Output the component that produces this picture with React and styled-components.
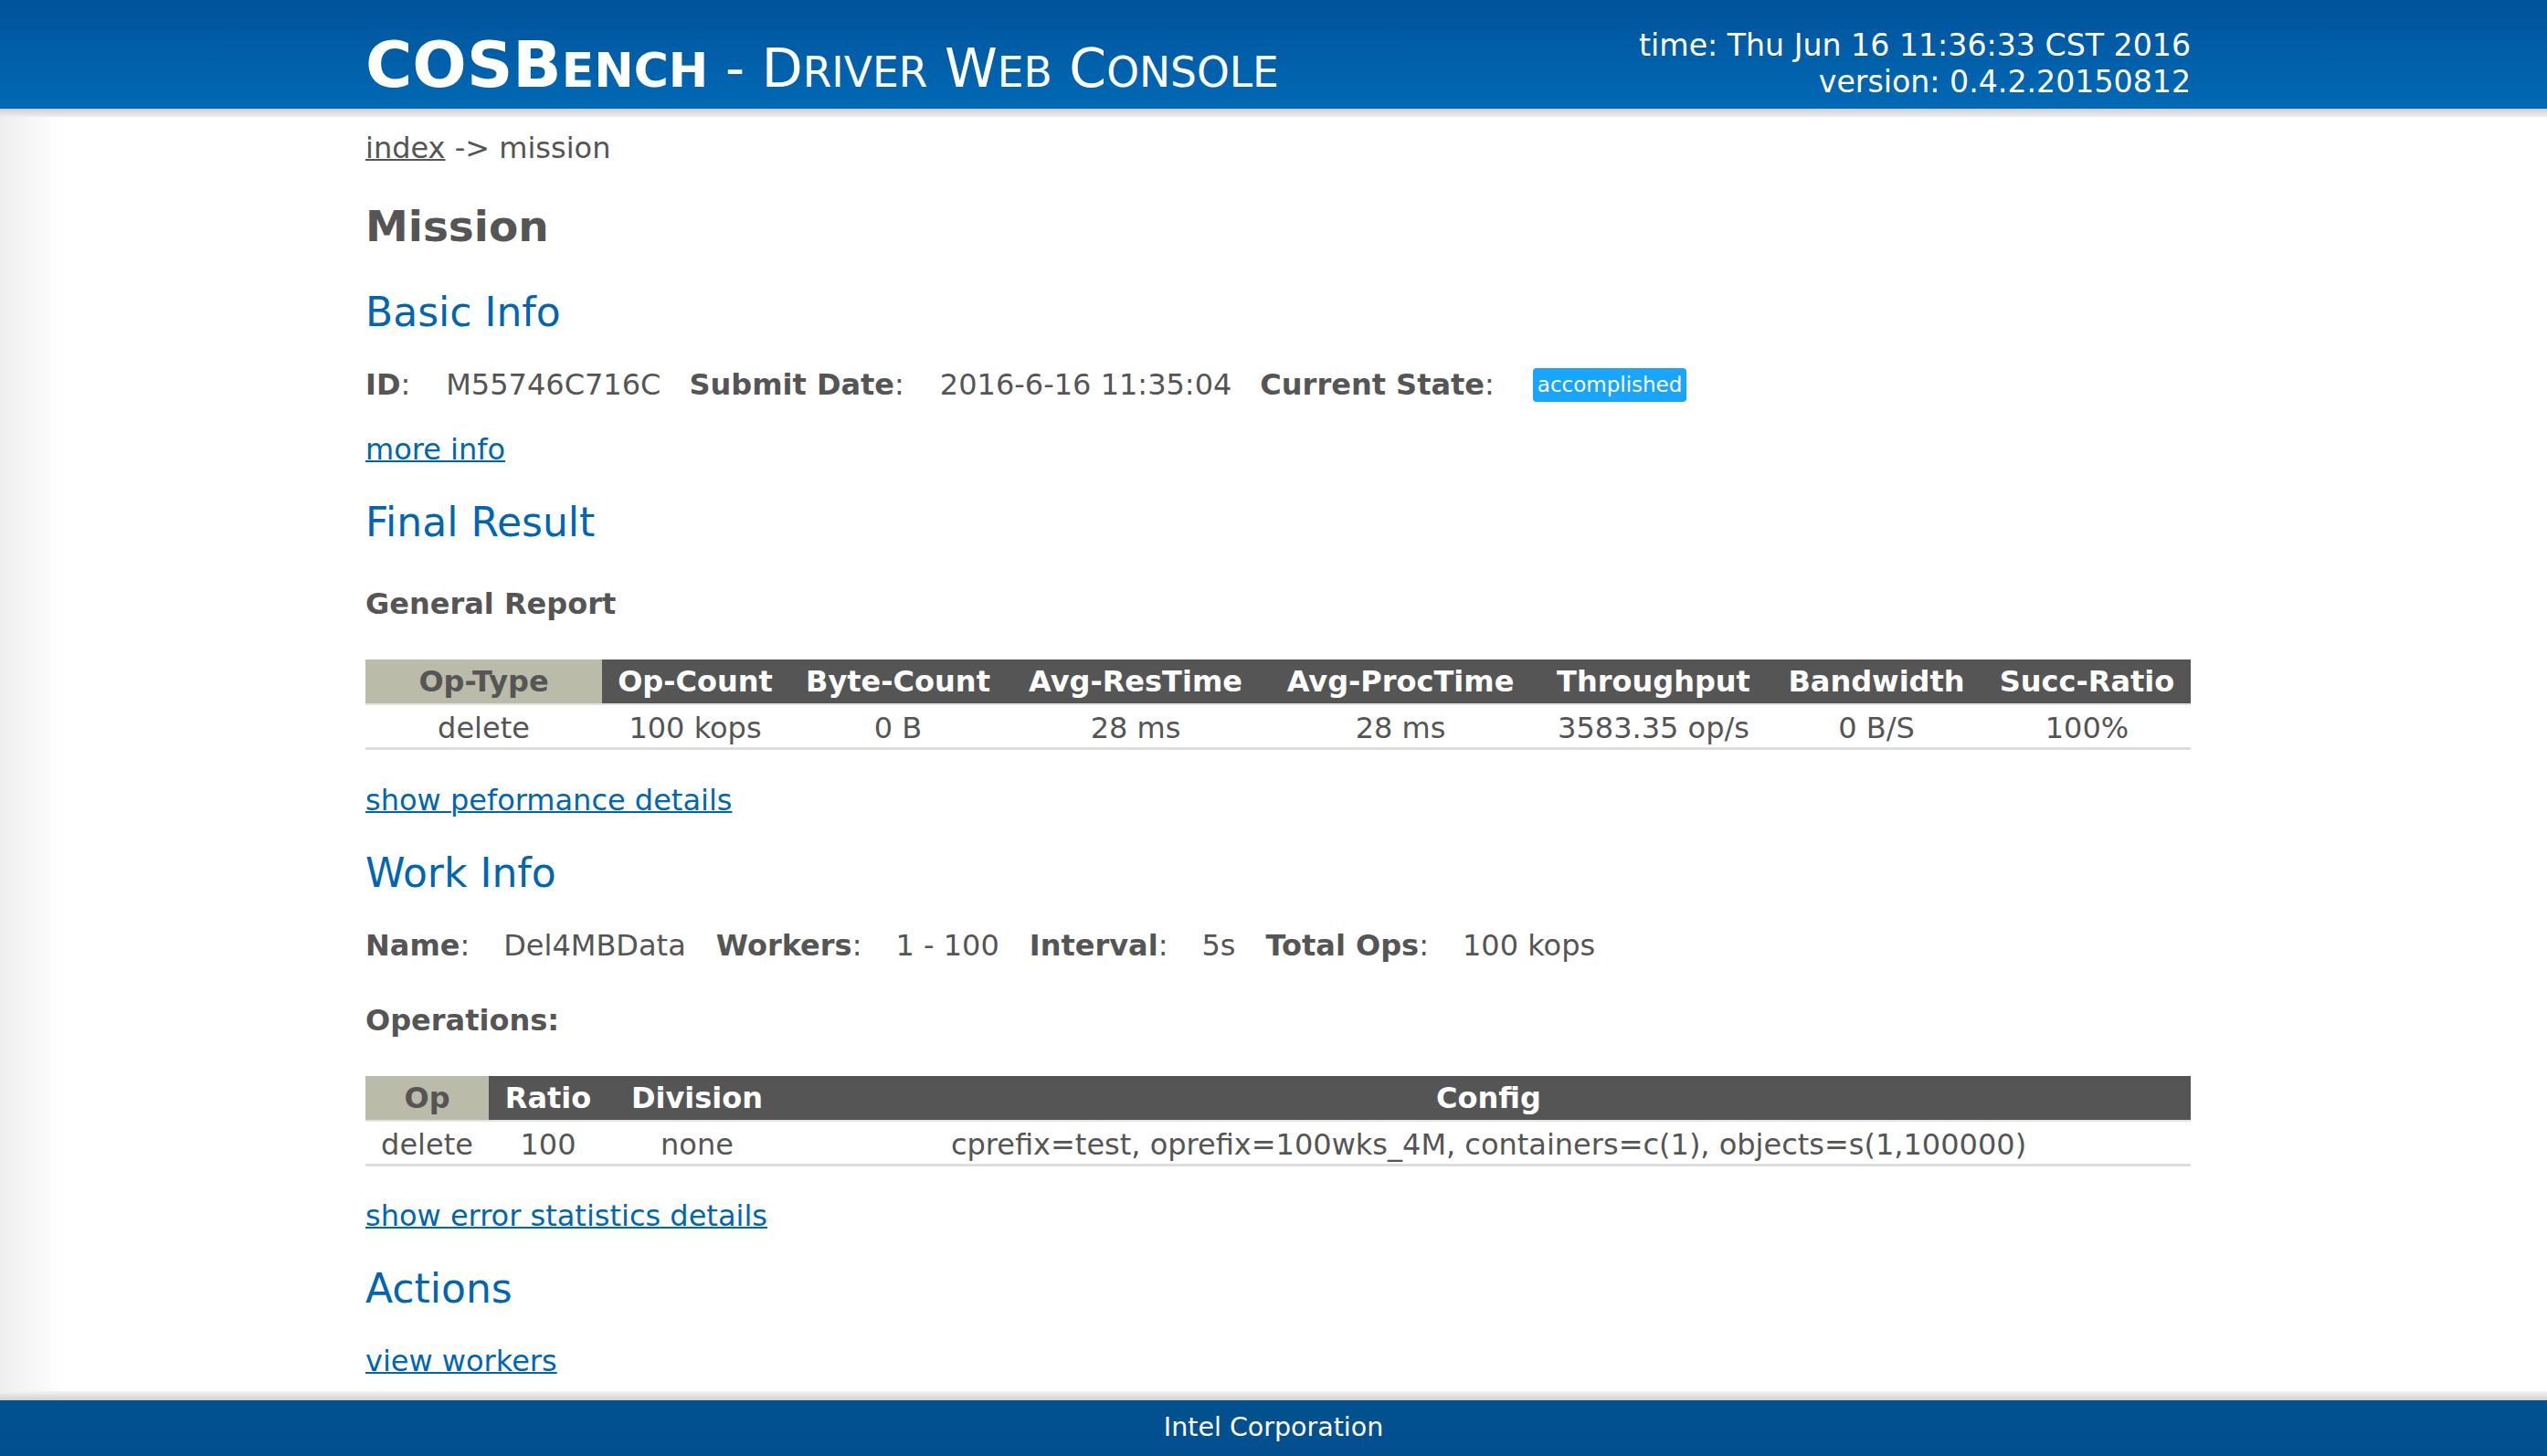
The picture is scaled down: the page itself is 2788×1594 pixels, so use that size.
import React from "react";
import styled, { createGlobalStyle } from "styled-components";

const GlobalStyle = createGlobalStyle`
  html, body {
    margin: 0;
    padding: 0;
  }
  body {
    font-family: "DejaVu Sans", Verdana, sans-serif;
    color: #555;
    background: linear-gradient(to right, #eeeeee 0, #ffffff 70px);
  }
`;

const Page = styled.div`
  display: flex;
  flex-direction: column;
  min-height: 100vh;
`;

const Container = styled.div`
  box-sizing: border-box;
  width: 2008px;
  margin: 0 auto;
  padding-left: 10px;
`;

const Header = styled.header`
  height: 119px;
  background: linear-gradient(to bottom, #01539b, #0169b5);
  color: #fff;
`;

const HeaderInner = styled(Container)`
  display: flex;
  justify-content: space-between;
  align-items: flex-start;
  height: 100%;
`;

const Shadow = styled.div`
  height: ${(p) => p.$h}px;
  background: linear-gradient(
    to bottom,
    ${(p) => (p.$up ? "#f4f4f4, #cfcfcf" : "#cfcfcf, #f0f0f0")}
  );
`;

const Title = styled.h1`
  margin: 36px 0 0;
  font-size: 70px;
  line-height: 70px;
  font-weight: normal;
  white-space: nowrap;
`;

const Brand = styled.span`
  font-weight: bold;
`;

const Small = styled.span`
  font-size: ${(p) => p.$size}px;
  text-transform: uppercase;
`;

const Sub = styled.span`
  font-size: 58.5px;
`;

const Meta = styled.div`
  margin-top: 30px;
  font-size: 33.2px;
  line-height: 40px;
  text-align: right;
`;

const Main = styled.main`
  flex: 1;
  padding-top: 14px;
`;

const Crumb = styled.div`
  font-size: 32px;
  line-height: 40px;
`;

const CrumbLink = styled.a`
  color: #555;
  text-decoration: underline;
  text-decoration-thickness: 2px;
`;

const PageTitle = styled.h2`
  margin: 36px 0 37px;
  font-size: 47px;
  line-height: 60px;
  font-weight: bold;
`;

const SectionTitle = styled.h3`
  margin: 33px 0 32px;
  font-size: 44px;
  line-height: 54px;
  font-weight: normal;
  color: #0066b3;
`;

const SubTitle = styled.h4`
  margin: 42px 0 41px;
  font-size: 32px;
  line-height: 40px;
  font-weight: bold;
`;

const InfoRow = styled.div`
  display: flex;
  align-items: center;
  height: 40px;
  margin-top: ${(p) => p.$top ?? 0}px;
  font-size: 32px;
  white-space: nowrap;
`;

const Label = styled.span`
  font-weight: bold;
`;

const Value = styled.span`
  margin: 0 ${(p) => p.$after ?? 31}px 0 ${(p) => p.$before ?? 39}px;
`;

const Badge = styled.span`
  margin-left: 42px;
  padding: 4px 5px;
  font-size: 23px;
  line-height: 29px;
  color: #fff;
  background: #18a4ff;
  border-radius: 4px;
`;

const LinkPara = styled.p`
  margin: ${(p) => p.$top ?? 32}px 0 0;
  font-size: 32px;
  line-height: 40px;
`;

const Link = styled.a`
  color: #0066b3;
  text-decoration: underline;
  text-decoration-thickness: 2px;
`;

const Table = styled.table`
  width: 100%;
  table-layout: fixed;
  border-collapse: collapse;
  font-size: 32px;
`;

const HeadRow = styled.tr`
  border-bottom: 2px solid #e2e2e2;
`;

const Th = styled.th`
  padding: 4px 0;
  line-height: 40px;
  font-weight: bold;
  text-align: center;
  white-space: nowrap;
  color: ${(p) => (p.$key ? "#555" : "#fff")};
  background: ${(p) => (p.$key ? "#bbbbaa" : "#555555")};
`;

const Td = styled.td`
  padding: 5px 0 1px;
  line-height: 40px;
  text-align: center;
  white-space: nowrap;
  border-bottom: 3px solid #dddddd;
`;

const Footer = styled.footer`
  height: 61px;
  line-height: 60px;
  text-align: center;
  font-size: 28.5px;
  color: #fff;
  background: linear-gradient(to bottom, #01528f, #034e8f);
`;

const reportCols = [
  ["Op-Type", 259, "delete"],
  ["Op-Count", 204, "100 kops"],
  ["Byte-Count", 240, "0 B"],
  ["Avg-ResTime", 280, "28 ms"],
  ["Avg-ProcTime", 300, "28 ms"],
  ["Throughput", 254, "3583.35 op/s"],
  ["Bandwidth", 234, "0 B/S"],
  ["Succ-Ratio", 227, "100%"],
];

const opCols = [
  ["Op", 135, "delete"],
  ["Ratio", 130, "100"],
  ["Division", 196, "none"],
  [
    "Config",
    1537,
    "cprefix=test, oprefix=100wks_4M, containers=c(1), objects=s(1,100000)",
  ],
];

function DataTable({ cols }) {
  return (
    <Table>
      <colgroup>
        {cols.map(([name, w]) => (
          <col key={name} width={w} />
        ))}
      </colgroup>
      <thead>
        <HeadRow>
          {cols.map(([name], i) => (
            <Th key={name} $key={i === 0}>
              {name}
            </Th>
          ))}
        </HeadRow>
      </thead>
      <tbody>
        <tr>
          {cols.map(([name, , val]) => (
            <Td key={name}>{val}</Td>
          ))}
        </tr>
      </tbody>
    </Table>
  );
}

export default function App() {
  return (
    <>
      <GlobalStyle />
      <Page>
        <Header>
          <HeaderInner>
            <Title>
              <Brand>
                COSB<Small $size={52}>ench</Small>
              </Brand>
              <Sub>
                {" - "}D<Small $size={45.5}>river</Small> W
                <Small $size={45.5}>eb</Small> C
                <Small $size={45.5}>onsole</Small>
              </Sub>
            </Title>
            <Meta>
              <div>time: Thu Jun 16 11:36:33 CST 2016</div>
              <div>version: 0.4.2.20150812</div>
            </Meta>
          </HeaderInner>
        </Header>
        <Shadow $h={9} />

        <Main>
          <Container>
            <Crumb>
              <CrumbLink href="#">index</CrumbLink> -&gt; mission
            </Crumb>
            <PageTitle>Mission</PageTitle>

            <SectionTitle>Basic Info</SectionTitle>
            <InfoRow $top={1}>
              <Label>ID</Label>:<Value>M55746C716C</Value>
              <Label>Submit Date</Label>:<Value>2016-6-16 11:35:04</Value>
              <Label>Current State</Label>:<Badge>accomplished</Badge>
            </InfoRow>
            <LinkPara $top={31}>
              <Link href="#">more info</Link>
            </LinkPara>

            <SectionTitle>Final Result</SectionTitle>
            <SubTitle>General Report</SubTitle>
            <DataTable cols={reportCols} />
            <LinkPara $top={35}>
              <Link href="#">show peformance details</Link>
            </LinkPara>

            <SectionTitle>Work Info</SectionTitle>
            <InfoRow>
              <Label>Name</Label>:<Value $before={37} $after={33}>Del4MBData</Value>
              <Label>Workers</Label>:<Value $before={37} $after={33}>1 - 100</Value>
              <Label>Interval</Label>:<Value $before={37} $after={33}>5s</Value>
              <Label>Total Ops</Label>:<Value $before={37}>100 kops</Value>
            </InfoRow>
            <SubTitle>Operations:</SubTitle>
            <DataTable cols={opCols} />
            <LinkPara $top={34}>
              <Link href="#">show error statistics details</Link>
            </LinkPara>

            <SectionTitle>Actions</SectionTitle>
            <LinkPara $top={0}>
              <Link href="#">view workers</Link>
            </LinkPara>
          </Container>
        </Main>

        <Shadow $h={10} $up />
        <Footer>Intel Corporation</Footer>
      </Page>
    </>
  );
}
